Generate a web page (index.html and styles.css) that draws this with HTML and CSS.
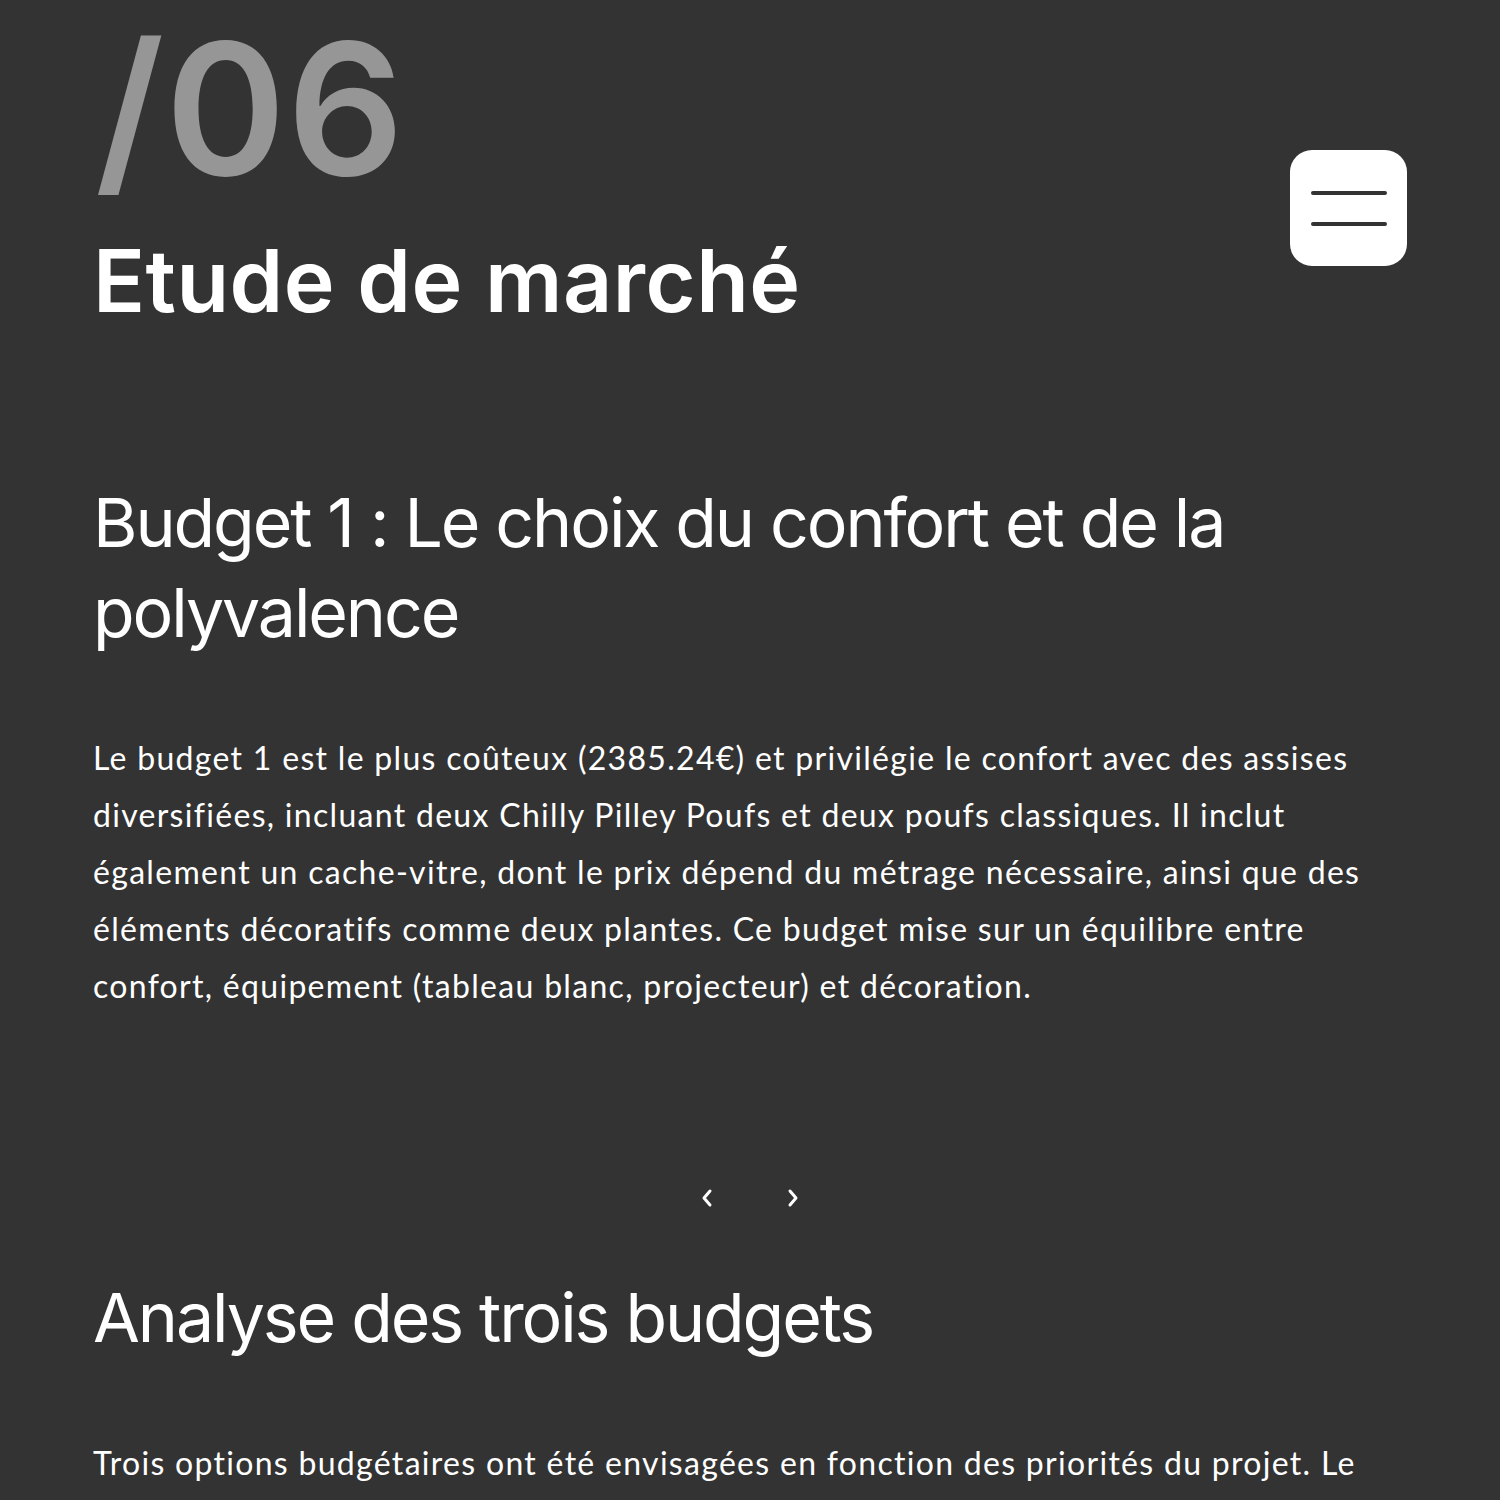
FILE: index.html
```html
<!DOCTYPE html>
<html lang="fr">
<head>
<meta charset="utf-8">
<title>Etude de marché</title>
<link rel="stylesheet" href="styles.css">
</head>
<body>
<main class="page">
  <header class="top">
    <div class="titles">
      <div class="num">/06</div>
      <h1 class="title">Etude de marché</h1>
    </div>
    <button class="menu" aria-label="Menu">
      <span class="bar"></span>
      <span class="bar"></span>
    </button>
  </header>

  <section class="slide">
    <h2 class="heading">Budget 1 : Le choix du confort et de la polyvalence</h2>
    <p class="text">Le budget 1 est le plus coûteux (2385.24€) et privilégie le confort avec des assises diversifiées, incluant deux Chilly Pilley Poufs et deux poufs classiques. Il inclut également un cache-vitre, dont le prix dépend du métrage nécessaire, ainsi que des éléments décoratifs comme deux plantes. Ce budget mise sur un équilibre entre confort, équipement (tableau blanc, projecteur) et décoration.</p>
  </section>

  <nav class="arrows">
    <button class="arrow" aria-label="Précédent">
      <svg width="14" height="20" viewBox="0 0 14 20"><path d="M10 3 L4 10 L10 17" fill="none" stroke="#fff" stroke-width="3" stroke-linecap="round" stroke-linejoin="round"/></svg>
    </button>
    <button class="arrow" aria-label="Suivant">
      <svg width="14" height="20" viewBox="0 0 14 20"><path d="M4 3 L10 10 L4 17" fill="none" stroke="#fff" stroke-width="3" stroke-linecap="round" stroke-linejoin="round"/></svg>
    </button>
  </nav>

  <section class="analysis">
    <h2 class="heading">Analyse des trois budgets</h2>
    <p class="text">Trois options budgétaires ont été envisagées en fonction des priorités du projet. Le budget 1 met l'accent sur le confort, le budget 2 sur l'équilibre et le budget 3 sur l'économie.</p>
  </section>
</main>
</body>
</html>
```

FILE: styles.css
```css
html, body {
  margin: 0;
  padding: 0;
  background: #333333;
}

body {
  color: #ffffff;
  font-family: "Inter", "Liberation Sans", sans-serif;
  height: 1500px;
  overflow: hidden;
}

.page {
  padding: 17px 93px 0 93px;
}

.top {
  display: flex;
  justify-content: space-between;
  align-items: flex-start;
}

.titles {
  display: flex;
  flex-direction: column;
}

.num {
  font-size: 183px;
  line-height: 1;
  font-weight: 600;
  color: #969696;
  letter-spacing: 1px;
  margin-left: 2px;
}

.title {
  margin: 38px 0 0 0;
  font-size: 86px;
  line-height: 1;
  font-weight: 600;
  letter-spacing: 0.5px;
}

.menu {
  margin-top: 133px;
  width: 117px;
  height: 116px;
  border: none;
  border-radius: 22px;
  background: #ffffff;
  display: flex;
  flex-direction: column;
  justify-content: center;
  align-items: center;
  gap: 27px;
  padding: 0;
}

.bar {
  display: block;
  width: 76px;
  height: 4px;
  border-radius: 2px;
  background: #333333;
}

.slide {
  margin-top: 153px;
}

.heading {
  margin: 0;
  font-size: 68px;
  line-height: 90px;
  font-weight: 400;
  letter-spacing: -2.1px;
}

.text {
  margin: 72px 0 0 0;
  font-family: "Lato", "Liberation Sans", sans-serif;
  font-size: 32px;
  line-height: 57px;
  font-weight: 400;
  letter-spacing: 1.3px;
}

.arrows {
  margin-top: 174px;
  display: flex;
  justify-content: center;
  gap: 72px;
}

.arrow {
  border: none;
  background: none;
  padding: 0;
  width: 14px;
  height: 20px;
  display: flex;
}

.analysis {
  margin-top: 64px;
}
```
